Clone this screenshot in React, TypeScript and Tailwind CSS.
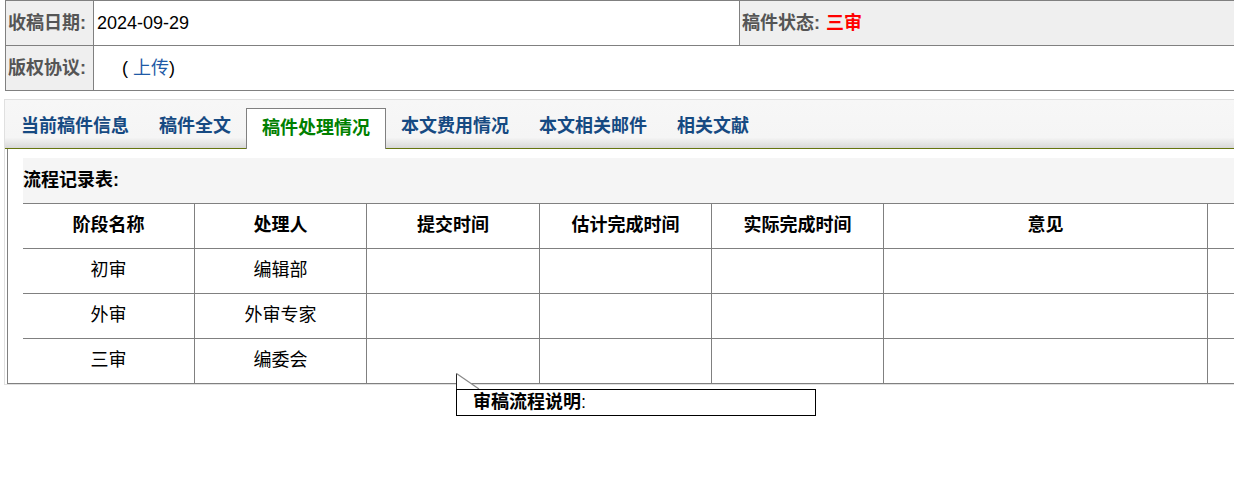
const FONT = "font-['Liberation_Sans','Noto_Sans_CJK_SC',sans-serif]";

const TABS = ["当前稿件信息", "稿件全文", "稿件处理情况", "本文费用情况", "本文相关邮件", "相关文献"];
const ACTIVE = "稿件处理情况";

const COLS = [
  { title: "阶段名称", w: "w-[172px]" },
  { title: "处理人", w: "w-[172px]" },
  { title: "提交时间", w: "w-[173px]" },
  { title: "估计完成时间", w: "w-[172px]" },
  { title: "实际完成时间", w: "w-[172px]" },
  { title: "意见", w: "w-[324px]" },
  { title: "", w: "w-[200px]" },
];

const ROWS = [
  ["初审", "编辑部"],
  ["外审", "外审专家"],
  ["三审", "编委会"],
];

export default function App() {
  return (
    <div className={`relative h-[492px] w-[1234px] overflow-hidden bg-white text-[18px] text-black ${FONT}`}>
      {/* top info */}
      <div className="ml-[5px] w-[1300px] border-l border-t border-[#808080]">
        <div className="flex h-[45px] border-b border-[#808080]">
          <div className="flex w-[88px] shrink-0 items-center border-r border-[#808080] bg-[#efefef] pl-[2px] font-bold text-[#555]">
            收稿日期:
          </div>
          <div className="flex w-[646px] shrink-0 items-center border-r border-[#808080] pl-[3px]">2024-09-29</div>
          <div className="flex flex-1 items-center bg-[#efefef] pl-[2px] font-bold text-[#555]">
            稿件状态: <span className="ml-[6px] text-[#ff0000]">三审</span>
          </div>
        </div>
        <div className="flex h-[45px] border-b border-[#808080]">
          <div className="flex w-[88px] shrink-0 items-center border-r border-[#808080] bg-[#efefef] pl-[2px] font-bold text-[#555]">
            版权协议:
          </div>
          <div className="flex flex-1 items-center pl-[28px]">
            (&nbsp;<a className="text-[#1f5aa6]">上传</a>)
          </div>
        </div>
      </div>

      {/* tabs + panel */}
      <div className="ml-[4px] mt-[8px] w-[1400px] border-b border-l border-t border-[#e0e0e0]">
        <div className="flex h-[49px] items-end border-b border-[#66750f] bg-[linear-gradient(to_bottom,#f7f7f7_0%,#f5f5f5_78%,#d8d8d8_100%)] pl-[1px]">
          {TABS.map((t) =>
            t === ACTIVE ? (
              <div
                key={t}
                className="-mb-px flex h-[41px] shrink-0 items-center border border-b-0 border-[#808080] bg-white px-[15px] pb-[2px] font-bold text-[#008000]"
              >
                {t}
              </div>
            ) : (
              <div
                key={t}
                className="flex h-[41px] shrink-0 items-center border border-transparent px-[14px] pb-[2px] font-bold text-[#164a82]"
              >
                {t}
              </div>
            ),
          )}
        </div>

        <div className="ml-[2px] border-b border-l border-[#808080] pl-[15px] pt-[9px]">
          <div className="flex h-[45px] items-center bg-[#f5f5f5] pb-[1px] font-bold">流程记录表:</div>
          <div className="flex h-[45px] border-t border-[#808080]">
            {COLS.map((c, i) => (
              <div
                key={i}
                className={`flex ${c.w} shrink-0 items-center justify-center border-r border-[#808080] pb-[1px] font-bold`}
              >
                {c.title}
              </div>
            ))}
          </div>
          {ROWS.map((r) => (
            <div key={r[0]} className="flex h-[45px] border-t border-[#808080]">
              {COLS.map((c, i) => (
                <div
                  key={i}
                  className={`flex ${c.w} shrink-0 items-center justify-center border-r border-[#808080] pb-[1px]`}
                >
                  {r[i] ?? ""}
                </div>
              ))}
            </div>
          ))}
        </div>
      </div>

      {/* callout */}
      <svg className="absolute left-[456px] top-[373px]" width="26" height="17" viewBox="0 0 26 17">
        <polygon points="0.5,0.5 24,16.5 0.5,16.5" fill="#fff" />
        <line x1="0.5" y1="0.5" x2="0.5" y2="17" stroke="#222" strokeWidth="1" />
        <line x1="0.5" y1="0.5" x2="23" y2="16" stroke="#888" strokeWidth="1.2" />
      </svg>
      <div className="absolute left-[456px] top-[389px] flex h-[27px] w-[360px] items-center border border-black bg-white pb-[1px] pl-[16px]">
        <span className="font-bold">审稿流程说明</span>:
      </div>
    </div>
  );
}
